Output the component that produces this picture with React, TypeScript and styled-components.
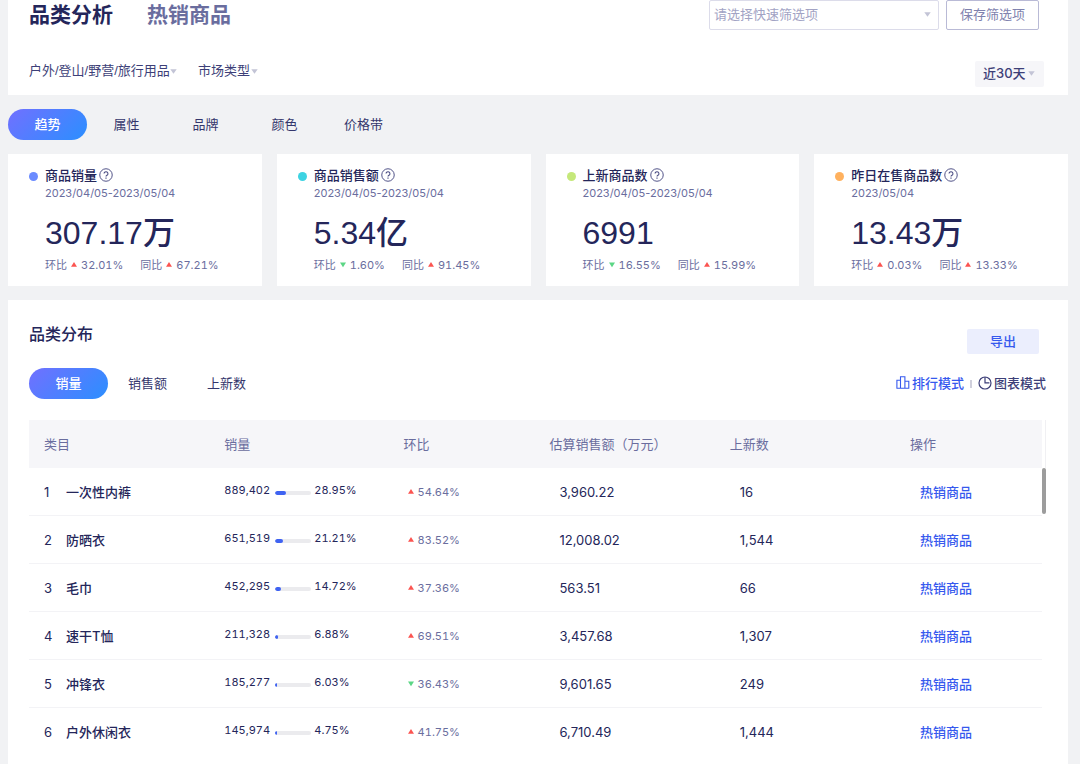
import React, { useState } from "react";
import styled, { createGlobalStyle } from "styled-components";

const GlobalStyle = createGlobalStyle`
  * { box-sizing: border-box; }
  body {
    margin: 0;
    background: #f1f2f4;
    color: #24265a;
    font-family: Inter, "Noto Sans CJK SC", sans-serif;
    font-size: 13px;
    line-height: 20px;
  }
  button, select {
    margin: 0;
    padding: 0;
    border: 0;
    background: none;
    font: inherit;
    color: inherit;
    cursor: pointer;
  }
  h1, h2, p { margin: 0; }
`;

const Page = styled.main`
  display: flex;
  flex-direction: column;
  min-height: 100vh;
  padding: 0 12px 0 8px;
`;

const FilterPanel = styled.header`
  display: flex;
  flex-direction: column;
  gap: 31px;
  padding: 0 24px 8px 21px;
  background: #fff;
`;

const Bar = styled.div<{ $inset?: number }>`
  display: flex;
  align-items: flex-start;
  justify-content: space-between;
  padding-right: ${(p) => p.$inset ?? 0}px;
`;

const ModeBar = styled(Bar)`
  align-items: center;
  padding: 14px 0 21px;
`;

const Group = styled.div<{ $gap: number }>`
  display: flex;
  align-items: center;
  gap: ${(p) => p.$gap}px;
`;

const PageTab = styled.button<{ $active?: boolean }>`
  height: 30px;
  font-size: 21px;
  line-height: 30px;
  font-weight: 700;
  color: ${(p) => (p.$active ? "#24265a" : "#6a6d9e")};
`;

const SelectBox = styled.label<{ $kind: "field" | "plain" | "chip" }>`
  display: flex;
  align-items: center;
  gap: 2px;
  color: #3d3f78;
  ${(p) =>
    p.$kind === "field" &&
    `width: 230px; height: 30px; padding: 0 7px 2px 4px; border: 1px solid #dcdcea; border-radius: 2px; color: #a2a3c4;`}
  ${(p) => p.$kind === "plain" && `gap: 0; font-family: "Liberation Sans", "Noto Sans CJK SC", sans-serif;`}
  ${(p) =>
    p.$kind === "chip" &&
    `height: 26px; padding: 0 9px 2px 8px; background: #f6f6f9; border-radius: 2px; font-weight: 500;`}
`;

const Select = styled.select`
  appearance: none;
  flex: 1;
  height: 20px;
  outline: none;
`;

const SaveButton = styled.button`
  width: 93px;
  height: 30px;
  padding-bottom: 2px;
  border: 1px solid #b9bad6;
  border-radius: 2px;
  color: #8082ae;
`;

const TabBar = styled.div`
  display: flex;
`;

const TrendTabs = styled.nav`
  padding: 14px 0;
`;

const PillTab = styled.button<{ $active?: boolean }>`
  width: 79px;
  height: 31px;
  padding-bottom: 2px;
  border-radius: 16px;
  color: ${(p) => (p.$active ? "#fff" : "#34366c")};
  font-weight: ${(p) => (p.$active ? 500 : 400)};
  background: ${(p) => (p.$active ? "linear-gradient(135deg, #7170ff 0%, #2b8fff 100%)" : "none")};
`;

const Cards = styled.section`
  display: grid;
  grid-template-columns: repeat(4, 1fr);
  gap: 15px;
`;

const Card = styled.article`
  display: grid;
  grid-template-columns: 16px 1fr;
  align-content: start;
  padding: 11px 0 13px 21px;
  background: #fff;
`;

const Dot = styled.span<{ $color: string }>`
  width: 9px;
  height: 9px;
  margin-top: 7px;
  border-radius: 50%;
  background: ${(p) => p.$color};
`;

const CardTitle = styled.h2`
  display: flex;
  align-items: center;
  gap: 2px;
  font-size: 13px;
  line-height: 20px;
  font-weight: 500;
`;

const CardDate = styled.p`
  font-size: 11px;
  line-height: 16px;
  color: #6a6d9e;
`;

const CardValue = styled.p`
  margin: 10px 0 2px;
  font-family: "Liberation Sans", "Noto Sans CJK SC", sans-serif;
  font-size: 32px;
  font-weight: 500;
  line-height: 44px;
`;

const Changes = styled.div`
  display: flex;
  gap: 17px;
`;

const ChangeText = styled.span`
  display: flex;
  align-items: center;
  gap: 4px;
  font-size: 11px;
  line-height: 16px;
  font-variant-numeric: tabular-nums;
  color: #6a6d9e;
`;

const Distribution = styled.section`
  flex: 1;
  margin-top: 14px;
  padding: 22px 22px 0 21px;
  background: #fff;
`;

const SectionTitle = styled.h1`
  font-size: 16px;
  line-height: 24px;
  font-weight: 500;
`;

const ExportButton = styled.button`
  width: 72px;
  height: 25px;
  margin-top: 7px;
  padding-bottom: 1px;
  border-radius: 2px;
  background: #ebeefd;
  color: #3659ee;
  font-weight: 500;
`;

const ModeButton = styled.button<{ $active?: boolean }>`
  display: flex;
  align-items: center;
  gap: 2px;
  padding-bottom: 2px;
  font-weight: 500;
  color: ${(p) => (p.$active ? "#3659ee" : "#3d3f78")};
`;

const Divider = styled.span`
  width: 2px;
  height: 8px;
  background: #d0d0dc;
`;

const TableArea = styled.div`
  display: grid;
  grid-template-columns: 1fr 4px;
`;

const Table = styled.table`
  width: 100%;
  table-layout: fixed;
  border-collapse: separate;
  border-spacing: 0;
`;

const HeadCell = styled.th<{ $width: string }>`
  width: ${(p) => p.$width};
  height: 48px;
  padding: 0 0 0 15px;
  background: #f6f6f9;
  text-align: left;
  font-weight: 400;
  color: #6a6d9e;
`;

const Cell = styled.td<{ $indent?: number }>`
  height: 48px;
  padding: 0 0 0 ${(p) => p.$indent ?? 15}px;
  border-bottom: 1px solid #f3f3f6;

  tr:last-child > & {
    border-bottom-color: transparent;
  }
`;

const Category = styled.span`
  display: grid;
  grid-template-columns: 22px 1fr;
  font-weight: 500;
`;

const Rank = styled.span`
  font-weight: 400;
`;

const Share = styled.span`
  display: grid;
  grid-template-columns: 51px 36px 1fr;
  align-items: center;
  font-size: 11px;
  line-height: 16px;
  font-variant-numeric: tabular-nums;
  padding-bottom: 3px;
`;

const ShareRate = styled.span`
  padding-left: 3px;
`;

const Track = styled.span`
  height: 4px;
  margin-top: 5px;
  border-radius: 2px;
  background: #ebebee;
  overflow: hidden;
`;

const Fill = styled.span`
  display: block;
  height: 4px;
  border-radius: 2px;
  background: #3f63f2;
`;

const ItemLink = styled.a`
  color: #3659ee;
  font-weight: 500;
  text-decoration: none;
`;

const Gutter = styled.div`
  padding-top: 48px;
  background: linear-gradient(#f0f0f3, #f0f0f3) right top / 1px 48px no-repeat;
`;

const Thumb = styled.div`
  height: 46px;
  border-radius: 2px;
  background: #9c9c9c;
`;

const Caret = () => (
  <svg width="7" height="5" viewBox="0 0 7 5" aria-hidden="true">
    <path d="M0.3 0.3h6.4L3.5 4.7z" fill="#c3c4d6" />
  </svg>
);

const HelpIcon = () => (
  <svg width="14" height="14" viewBox="0 0 13 13" fill="none" stroke="#4c4e84" aria-hidden="true">
    <circle cx="6.5" cy="6.5" r="5.8" strokeWidth="0.9" />
    <path d="M4.7 5.2a1.8 1.8 0 1 1 2.7 1.6c-.6.35-.9.6-.9 1.2" strokeWidth="1" />
    <path d="M6.5 8.9v1" strokeWidth="1.1" />
  </svg>
);

const RankIcon = () => (
  <svg width="14" height="13" viewBox="0 0 14 13" fill="none" stroke="currentColor" strokeWidth="1.1" aria-hidden="true">
    <path d="M.9 12.2V4.3h3.6M4.5 12.2V.8h4.4v11.4M8.9 5.3h3.9v6.9M.4 12.2h12.9" />
  </svg>
);

const PieIcon = () => (
  <svg width="14" height="14" viewBox="0 0 14 14" fill="none" stroke="currentColor" strokeWidth="1.2" aria-hidden="true">
    <circle cx="7" cy="7" r="6" />
    <path d="M7 1v5.8h4.4" />
  </svg>
);

const Change = ({ up, value }: { up: boolean; value: string }) => (
  <>
    <svg width="6" height="6" viewBox="0 0 6 6" aria-hidden="true">
      <path d={up ? "M3 0 6 4.8H0z" : "M3 5.2 6 .4H0z"} fill={up ? "#fb5450" : "#5cd685"} />
    </svg>
    {value}
  </>
);

const Dropdown = ({ kind, label, text }: { kind: "field" | "plain" | "chip"; label: string; text: string }) => (
  <SelectBox $kind={kind}>
    <Select aria-label={label}>
      <option>{text}</option>
    </Select>
    <Caret />
  </SelectBox>
);

const cards = [
  { color: "#6b8bff", title: "商品销量", date: "2023/04/05-2023/05/04", value: "307.17万", ring: [true, "32.01%"], year: "67.21%" },
  { color: "#3dd3e2", title: "商品销售额", date: "2023/04/05-2023/05/04", value: "5.34亿", ring: [false, "1.60%"], year: "91.45%" },
  { color: "#c5e87a", title: "上新商品数", date: "2023/04/05-2023/05/04", value: "6991", ring: [false, "16.55%"], year: "15.99%" },
  { color: "#ffb15e", title: "昨日在售商品数", date: "2023/05/04", value: "13.43万", ring: [true, "0.03%"], year: "13.33%" },
] as { color: string; title: string; date: string; value: string; ring: [boolean, string]; year: string }[];

const columns = [
  ["类目", "17.8%"],
  ["销量", "17.7%"],
  ["环比", "14.4%"],
  ["估算销售额（万元）", "17.8%"],
  ["上新数", "17.8%"],
  ["操作", "14.5%"],
];

const rows = [
  { name: "一次性内裤", sales: "889,402", share: 28.95, up: true, change: "54.64%", amount: "3,960.22", fresh: "16" },
  { name: "防晒衣", sales: "651,519", share: 21.21, up: true, change: "83.52%", amount: "12,008.02", fresh: "1,544" },
  { name: "毛巾", sales: "452,295", share: 14.72, up: true, change: "37.36%", amount: "563.51", fresh: "66" },
  { name: "速干T恤", sales: "211,328", share: 6.88, up: true, change: "69.51%", amount: "3,457.68", fresh: "1,307" },
  { name: "冲锋衣", sales: "185,277", share: 6.03, up: false, change: "36.43%", amount: "9,601.65", fresh: "249" },
  { name: "户外休闲衣", sales: "145,974", share: 4.75, up: true, change: "41.75%", amount: "6,710.49", fresh: "1,444" },
];

const PillTabs = ({ items }: { items: string[] }) => {
  const [active, setActive] = useState(0);
  return (
    <TabBar role="tablist">
      {items.map((item, i) => (
        <PillTab key={item} role="tab" aria-selected={i === active} $active={i === active} onClick={() => setActive(i)}>
          {item}
        </PillTab>
      ))}
    </TabBar>
  );
};

export default function App() {
  return (
    <>
      <GlobalStyle />
      <Page>
        <FilterPanel>
          <Bar $inset={5}>
            <Group $gap={34}>
              <PageTab $active>品类分析</PageTab>
              <PageTab>热销商品</PageTab>
            </Group>
            <Group $gap={7}>
              <Dropdown kind="field" label="快速筛选项" text="请选择快速筛选项" />
              <SaveButton>保存筛选项</SaveButton>
            </Group>
          </Bar>
          <Bar>
            <Group $gap={21}>
              <Dropdown kind="plain" label="类目" text="户外/登山/野营/旅行用品" />
              <Dropdown kind="plain" label="市场类型" text="市场类型" />
            </Group>
            <Dropdown kind="chip" label="时间范围" text="近30天" />
          </Bar>
        </FilterPanel>

        <TrendTabs>
          <PillTabs items={["趋势", "属性", "品牌", "颜色", "价格带"]} />
        </TrendTabs>

        <Cards>
          {cards.map((c) => (
            <Card key={c.title}>
              <Dot $color={c.color} />
              <div>
                <CardTitle>
                  {c.title}
                  <HelpIcon />
                </CardTitle>
                <CardDate>{c.date}</CardDate>
                <CardValue>{c.value}</CardValue>
                <Changes>
                  <ChangeText>
                    环比 <Change up={c.ring[0]} value={c.ring[1]} />
                  </ChangeText>
                  <ChangeText>
                    同比 <Change up value={c.year} />
                  </ChangeText>
                </Changes>
              </div>
            </Card>
          ))}
        </Cards>

        <Distribution>
          <Bar $inset={7}>
            <SectionTitle>品类分布</SectionTitle>
            <ExportButton>导出</ExportButton>
          </Bar>
          <ModeBar>
            <PillTabs items={["销量", "销售额", "上新数"]} />
            <Group $gap={6}>
              <ModeButton $active>
                <RankIcon />
                排行模式
              </ModeButton>
              <Divider />
              <ModeButton>
                <PieIcon />
                图表模式
              </ModeButton>
            </Group>
          </ModeBar>
          <TableArea>
            <Table>
              <thead>
                <tr>
                  {columns.map(([name, width]) => (
                    <HeadCell key={name} scope="col" $width={width}>
                      {name}
                    </HeadCell>
                  ))}
                </tr>
              </thead>
              <tbody>
                {rows.map((r, i) => (
                  <tr key={r.name}>
                    <Cell>
                      <Category>
                        <Rank>{i + 1}</Rank>
                        {r.name}
                      </Category>
                    </Cell>
                    <Cell>
                      <Share>
                        {r.sales}
                        <Track>
                          <Fill style={{ width: `${r.share}%` }} />
                        </Track>
                        <ShareRate>{r.share.toFixed(2)}%</ShareRate>
                      </Share>
                    </Cell>
                    <Cell $indent={19}>
                      <ChangeText>
                        <Change up={r.up} value={r.change} />
                      </ChangeText>
                    </Cell>
                    <Cell $indent={25}>{r.amount}</Cell>
                    <Cell $indent={25}>{r.fresh}</Cell>
                    <Cell $indent={25}>
                      <ItemLink href="#">热销商品</ItemLink>
                    </Cell>
                  </tr>
                ))}
              </tbody>
            </Table>
            <Gutter>
              <Thumb />
            </Gutter>
          </TableArea>
        </Distribution>
      </Page>
    </>
  );
}
